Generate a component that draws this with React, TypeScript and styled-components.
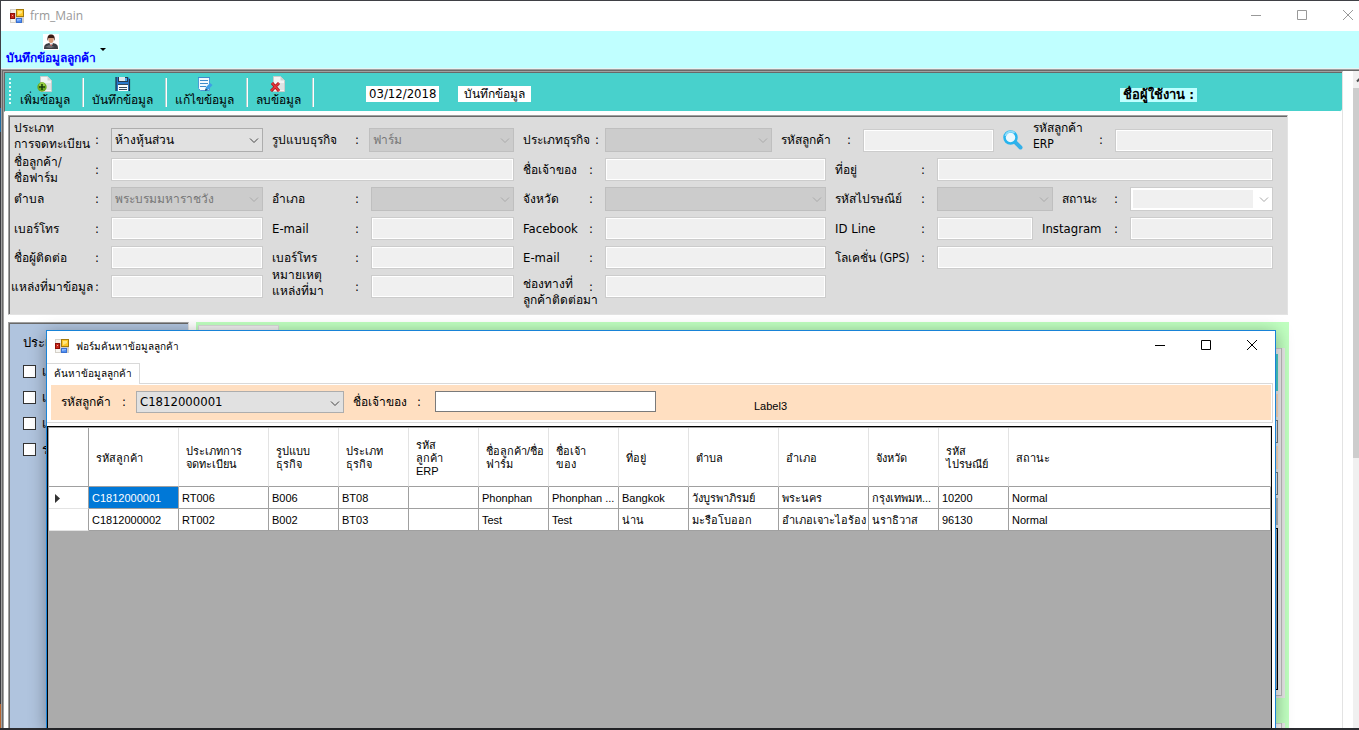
import React from "react";
import styled, { createGlobalStyle, css } from "styled-components";

const tahoma = `"DejaVu Sans Condensed", "Noto Sans", sans-serif`;
const sansSerif = `"Liberation Sans", sans-serif`;
const segoe = `"Open Sans", "Noto Sans", sans-serif`;

const GlobalStyle = createGlobalStyle`
  *, *::before, *::after { box-sizing: border-box; }
  body { margin: 0; background: #2b2c30; font-family: ${tahoma}; font-size: 13px; color: #000; overflow: hidden; }
  button, input, select { font: inherit; color: inherit; margin: 0; border-radius: 0; }
`;

const sunken = css`
  border-style: solid;
  border-width: 1px;
  border-color: #a0a0a0 #e3e3e3 #e3e3e3 #a0a0a0;
  box-shadow: inset 1px 1px 0 #696969;
`;

const Desktop = styled.div`
  position: relative;
  display: flex;
  flex-direction: column;
  height: 100vh;
  padding: 1px 0 2px 1px;
  background: linear-gradient(#3f4045 0 108px, #1f6aa0 108px 132px, #3a3b3f 132px 704px, #b5622c 704px 728px, #2b2c30 728px);
  overflow: hidden;
`;

const TitleBar = styled.header<{ $inner?: boolean }>`
  display: flex;
  align-items: center;
  flex: none;
  gap: ${(p) => (p.$inner ? 7 : 6)}px;
  height: ${(p) => (p.$inner ? 29 : 30)}px;
  padding-left: ${(p) => (p.$inner ? 8 : 9)}px;
  background: #fff;
  color: ${(p) => (p.$inner ? "#000" : "#999")};
`;

const Title = styled.h1<{ $inner?: boolean }>`
  flex: 1;
  margin: 0;
  font: 400 ${(p) => (p.$inner ? 10 : 12)}px/16px ${segoe};
`;

const Controls = styled.div<{ $inner?: boolean }>`
  display: flex;
  align-self: stretch;
  gap: ${(p) => (p.$inner ? 0 : 24)}px;
`;

const ControlButton = styled.button<{ $inner?: boolean }>`
  display: flex;
  align-items: center;
  justify-content: center;
  width: ${(p) => (p.$inner ? 46 : 22)}px;
  padding: 0 0 2px;
  border: 0;
  background: none;
`;

const MenuStrip = styled.nav`
  display: flex;
  align-items: center;
  flex: none;
  gap: 4px;
  height: 38px;
  padding: 1px 0 0 5px;
  background: #c0ffff;
  border-bottom: 1px solid #e8f4f4;
`;

const MenuButton = styled.button`
  display: flex;
  flex-direction: column;
  align-items: center;
  padding: 0;
  border: 0;
  background: none;
  color: #0000ff;
  font: 700 12px/17px ${sansSerif};
`;

const Mdi = styled.div`
  display: flex;
  flex: 1;
  min-height: 0;
  background: #fff;
  border-top: 1px solid #a0a0a0;
  border-left: 1px solid #a0a0a0;
`;

const MdiEdge = styled.div`
  display: flex;
  flex: 1;
  min-width: 0;
  border-top: 1px solid #696969;
  border-left: 1px solid #696969;
`;

const ChildForm = styled.main`
  display: flex;
  flex-direction: column;
  flex: 1;
  min-width: 0;
  margin-right: 10px;
  background: #fff;
  border-style: solid;
  border-width: 1px 1px 0;
  border-color: #a0a0a0 #e3e3e3 #e3e3e3 #a0a0a0;
`;

const ScrollTrack = styled.div`
  flex: none;
  width: 6px;
  background: #f0f0f0;
  overflow: hidden;
`;

const ScrollArrow = styled.svg`
  display: block;
  width: 17px;
  height: 17px;
`;

const ScrollThumb = styled.div`
  height: 370px;
  background: #cdcdcd;
`;

const ToolStrip = styled.div`
  display: flex;
  flex: none;
  height: 40px;
  border-top: 1px solid #696969;
  border-left: 1px solid #696969;
  border-bottom: 1px solid #fff;
  border-radius: 0 0 3px 0;
  background: #48d1cc;
`;

const Grip = styled.i`
  width: 2px;
  margin: 5px 0 5px 4px;
  background: repeating-linear-gradient(#e6fbfa 0 2px, #48d1cc 2px 4px);
`;

const ToolButton = styled.button<{ $width: number }>`
  display: flex;
  flex-direction: column;
  align-items: center;
  width: ${(p) => p.$width}px;
  padding: 3px 4px 0 0;
  border: 0;
  background: none;
  font-size: 12px;
  line-height: 17px;
  white-space: nowrap;
`;

const Separator = styled.i`
  width: 2px;
  margin: 5px 0 4px;
  background: linear-gradient(90deg, #b5d0cf 50%, #fff 50%);
`;

const Tag = styled.span<{ $user?: boolean; $small?: boolean }>`
  align-self: flex-start;
  margin: ${(p) => (p.$user ? "15px 145px 0 auto" : "13px 0 0 19px")};
  padding: 0 ${(p) => (p.$small ? 6 : 3)}px;
  background: ${(p) => (p.$user ? "#c0ffff" : "#fff")};
  font-size: ${(p) => (p.$small ? 12 : 13)}px;
  font-weight: ${(p) => (p.$user ? 700 : 400)};
  line-height: ${(p) => (p.$user ? 14 : 16)}px;
  white-space: nowrap;
`;

const ToolGap = styled.span`
  width: 33px;
`;

const FormPanel = styled.form`
  ${sunken}
  display: flex;
  flex-direction: column;
  flex: none;
  gap: 6px;
  margin: 3px 54px 0 4px;
  padding: 12px 14px 16px 1px;
  background: #dcdcdc;
`;

const FormRow = styled.div<{ $tall?: boolean }>`
  display: flex;
  align-items: center;
  height: ${(p) => (p.$tall ? 24 : 23)}px;
`;

type Shift = "up" | "down" | undefined;

const LabelBox = styled.label<{ $width: number; $edge?: number; $end?: number }>`
  display: flex;
  align-items: center;
  flex: none;
  width: ${(p) => p.$width}px;
  padding: 0 ${(p) => p.$end ?? 12}px 0 ${(p) => p.$edge ?? 9}px;
  line-height: 16px;
  white-space: pre;
`;

const LabelText = styled.span<{ $shift?: Shift; $latin?: boolean }>`
  flex: 1;
  min-width: 0;
  padding: ${(p) => (p.$shift === "up" ? "0 0 8px" : p.$shift === "down" ? "10px 0 0" : "0")};
  font-size: ${(p) => (p.$latin ? 13 : 12)}px;
`;

const TextField = styled.input<{ $basis: number }>`
  flex: ${(p) => p.$basis} 1 ${(p) => p.$basis}px;
  min-width: 0;
  height: 23px;
  padding: 0 3px;
  border: 1px solid #ccc;
  outline: 1px solid #fff;
  outline-offset: -2px;
  background: #f0f0f0;
`;

const ComboBox = styled.span<{ $basis: number }>`
  position: relative;
  display: flex;
  flex: ${(p) => p.$basis} 1 ${(p) => p.$basis}px;
  min-width: 0;
  font-size: 12px;
`;

const comboSkins = {
  enabled: css`background: #e1e1e1; border: 1px solid #adadad; color: #000;`,
  disabled: css`background: #ccc; border: 1px solid #bfbfbf; color: #777;`,
  editable: css`
    background: linear-gradient(#f0f0f0, #f0f0f0) 2px 2px / calc(100% - 21px) calc(100% - 4px) no-repeat #fff;
    border: 1px solid #ccc;
    color: #777;
  `,
};

const Select = styled.select<{ $skin: keyof typeof comboSkins; $height?: number }>`
  appearance: none;
  width: 100%;
  height: ${(p) => p.$height ?? 24}px;
  padding: 0 20px 0 3px;
  opacity: 1;
  ${(p) => comboSkins[p.$skin]}
`;

const ComboArrow = styled.svg`
  position: absolute;
  right: 4px;
  top: 9px;
  width: 10px;
  height: 7px;
  pointer-events: none;
`;

const SearchButton = styled.button`
  display: flex;
  flex: none;
  width: 39px;
  padding: 0 0 0 9px;
  border: 0;
  background: none;
`;

const Lower = styled.div`
  display: flex;
  flex: 1;
  min-height: 0;
  gap: 7px;
  margin: 7px 53px 0 4px;
`;

const SidePanel = styled.fieldset`
  ${sunken}
  display: flex;
  flex-direction: column;
  flex: none;
  gap: 10px;
  width: 181px;
  margin: 0;
  padding: 11px 0 0 14px;
  border-bottom: 0;
  background: #b0c4de;
`;

const SideHeading = styled.span`
  margin-bottom: 1px;
  line-height: 18px;
`;

const CheckLabel = styled.label`
  display: flex;
  align-items: center;
  gap: 6px;
  height: 16px;
`;

const CheckBox = styled.input`
  appearance: none;
  width: 13px;
  height: 13px;
  border: 1px solid #333;
  background: #fff;
`;

const GreenPanel = styled.section`
  display: flex;
  flex-direction: column;
  flex: 1;
  min-width: 0;
  padding: 3px 4px 0 2px;
  background: #c0ffc0;
  overflow: hidden;
`;

const BackTab = styled.div`
  flex: none;
  width: 81px;
  height: 23px;
  background: #f0f0f0;
  border: 1px solid #d9d9d9;
`;

const BackPage = styled.div`
  display: flex;
  flex-direction: column;
  flex: none;
  height: 350px;
  margin-bottom: 25px;
  padding: 6px 4px 6px 0;
  border-right: 3px solid #e6e6e6;
  border-bottom: 2px solid #e6e6e6;
  background: #f0f0f0;
  box-shadow: inset -1px -1px 0 #bbb, inset 0 1px 0 #ccc;
`;

const BackBlock = styled.div<{ $height: number; $color: string; $line?: string }>`
  flex: none;
  height: ${(p) => p.$height}px;
  margin-bottom: 3px;
  background: ${(p) => p.$color};
  border: 1px solid ${(p) => p.$line ?? "transparent"};
`;

const Dialog = styled.section`
  position: absolute;
  top: 330px;
  right: 83px;
  bottom: 2px;
  left: 46px;
  display: flex;
  flex-direction: column;
  border: 1px solid #1883d7;
  border-bottom: 0;
  background: #fff;
  box-shadow: 0 3px 16px rgba(0, 0, 0, 0.35);
  font: 11px/13px ${sansSerif};
`;

const TabRow = styled.div`
  display: flex;
  flex: none;
  height: 23px;
  padding-top: 3px;
`;

const Tab = styled.button`
  position: relative;
  width: 93px;
  height: 21px;
  padding: 0 0 2px;
  border: 1px solid #d9d9d9;
  border-width: 1px 1px 0 0;
  background: #fff;
  font-size: 10px;
  white-space: nowrap;
`;

const TabPage = styled.div`
  display: flex;
  flex: none;
  height: 40px;
  margin-right: 2px;
  padding: 1px 1px 2px 4px;
  border: 1px solid #d9d9d9;
  border-left: 0;
`;

const FilterBar = styled.form`
  display: flex;
  align-items: flex-start;
  flex: 1;
  padding: 6px 0 0 1px;
  background: #ffdfc1;
  font: 13px/16px ${tahoma};
`;

const FilterLabel = styled(LabelBox)`
  height: 22px;
`;

const FilterCombo = styled.span`
  position: relative;
  width: 208px;
`;

const OwnerInput = styled.input`
  width: 221px;
  height: 21px;
  padding: 0 3px;
  border: 1px solid #7a7a7a;
  background: #fff;
`;

const Note = styled.span`
  margin: 7px 0 0 98px;
  font: 11px/16px ${sansSerif};
`;

const GridFrame = styled.div`
  flex: 1;
  min-height: 0;
  margin: 3px 3px 0 0;
  border: 1px solid #000;
  border-bottom: 0;
  background: #ababab;
  overflow: hidden;
`;

const DataTable = styled.table`
  width: 100%;
  table-layout: fixed;
  border-collapse: separate;
  border-spacing: 0;
  border-top: 1px solid #a0a0a0;
  border-left: 1px solid #a0a0a0;
  background: #fff;
`;

const HeadCell = styled.th`
  height: 59px;
  padding: 2px 2px 0 7px;
  border-right: 1px solid #e3e3e3;
  border-bottom: 1px solid #a0a0a0;
  font-weight: 400;
  text-align: left;
  vertical-align: middle;
  white-space: pre-line;
  line-height: 13px;

  &:first-child { border-right-color: #a0a0a0; }
`;

const Cell = styled.td<{ $selected?: boolean }>`
  height: 22px;
  padding: 2px 0 0 3px;
  border-right: 1px solid #a0a0a0;
  border-bottom: 1px solid #a0a0a0;
  background: ${(p) => (p.$selected ? "#0078d7" : "#fff")};
  color: ${(p) => (p.$selected ? "#fff" : "#000")};
  overflow: hidden;
  text-overflow: ellipsis;
  white-space: nowrap;
`;

const RowHead = styled.th`
  padding: 2px 0 0 6px;
  border-right: 1px solid #a0a0a0;
  border-bottom: 1px solid #e3e3e3;
  text-align: left;
  line-height: 0;
`;

const FormIcon = () => (
  <svg width="14" height="14" viewBox="0 0 14 14" aria-hidden="true">
    <rect width="14" height="14" fill="#d4d0c8" />
    <rect x="1" y="1" width="5" height="3" fill="#f2f0ea" />
    <rect x="1" y="10" width="4" height="3" fill="#f7f6f2" />
    <rect x="6.5" y="0.5" width="7" height="7" fill="#ffc928" stroke="#a57b0b" />
    <path d="M8 2h4v2L8 6z" fill="#ffe680" />
    <rect x="0.5" y="4.5" width="4" height="5" fill="#c9281b" stroke="#8c1008" />
    <rect x="2" y="6" width="1" height="1" fill="#f5a79c" />
    <rect x="6.5" y="9.5" width="5" height="4" fill="#4f8df0" stroke="#3a70cf" />
    <path d="M7 10h4v1l-4 1z" fill="#8dbaff" />
  </svg>
);

const PersonIcon = () => (
  <svg width="16" height="16" viewBox="0 0 16 16" aria-hidden="true">
    <rect width="16" height="16" fill="#fff" />
    <path d="M1 15c0-4 1-5 5-6h4c4 1 5 2 5 6z" fill="#3b3d42" />
    <path d="M6.5 9L8 14l2-5z" fill="#e9edf2" />
    <path d="M8 10l-.7 1L8 14l.8-3z" fill="#b32a20" />
    <path d="M2 13l4-2 6 2-5 1z" fill="#6c6e73" />
    <ellipse cx="8" cy="5.5" rx="2.6" ry="3.5" fill="#d79a78" />
    <path d="M4.500 7C4 2 5.500 .5 8 .5s4.500 1.500 3.500 6.500l-1-3-5 0z" fill="#3a1d16" />
  </svg>
);

const Sheet = () => (
  <>
    <path d="M3.500 .5h7l4 4v11h-11z" fill="#f3f4f4" stroke="#c9cccc" />
    <path d="M10.500 .5v4h4z" fill="#cfd3d3" />
    <path d="M8 7h6v7H8z" fill="#dfe3e3" />
  </>
);

const AddIcon = () => (
  <svg width="16" height="16" viewBox="0 0 16 16" aria-hidden="true">
    <Sheet />
    <circle cx="5" cy="11" r="4.700" fill="#6aa81d" />
    <circle cx="5" cy="9.500" r="3" fill="#9ace43" />
    <path d="M5 8v6M2 11h6" stroke="#153a08" strokeWidth="1.500" />
  </svg>
);

const SaveIcon = () => (
  <svg width="16" height="16" viewBox="0 0 16 16" aria-hidden="true">
    <path d="M1 1h12l2 2v12H1z" fill="#2877c9" />
    <path d="M1 1v14M14.500 3v12" stroke="#1b3348" strokeWidth="1.200" />
    <rect x="3" y="1" width="10" height="5" fill="#25394b" />
    <rect x="4" y="1" width="6" height="4" fill="#dfe9ee" />
    <rect x="10" y="2" width="2" height="3" fill="#49a9ee" />
    <rect x="3" y="8" width="10" height="7" fill="#f6fbfd" />
    <path d="M3 8.500h10M4 11.500h8M4 13.500h8" stroke="#35495a" />
  </svg>
);

const EditIcon = () => (
  <svg width="16" height="16" viewBox="0 0 16 16" aria-hidden="true">
    <path d="M1.500 1.500h11v13h-9l-2-2z" fill="#f2f9fe" stroke="#4a9bd6" />
    <path d="M1 1.500h12M3 4.500h8M3 7.500h8M3 10.500h6" stroke="#3c8ccb" />
    <path d="M8 15l1-4 4-4 2.500 2-4.500 5z" fill="#3d9fe6" />
    <path d="M8 15l.7-2.500 1.800 1.500z" fill="#24425a" />
  </svg>
);

const DeleteIcon = () => (
  <svg width="16" height="16" viewBox="0 0 16 16" aria-hidden="true">
    <Sheet />
    <path d="M2 7l7 8M9 7l-8 8" stroke="#a81218" strokeWidth="3" />
    <path d="M2 7l7 8M9 7l-8 8" stroke="#e5383c" strokeWidth="1.500" />
  </svg>
);

const SearchIcon = () => (
  <svg width="20" height="20" viewBox="0 0 20 20" aria-hidden="true">
    <path d="M12 12l5.500 5.500" stroke="#35b0e8" strokeWidth="4" strokeLinecap="round" />
    <circle cx="7.500" cy="7.500" r="6" fill="#eaf8fe" stroke="#27b4ee" strokeWidth="2.500" />
    <path d="M2.500 6a5.500 5.500 0 0 1 9-3" fill="none" stroke="#8edcfa" strokeWidth="2" />
  </svg>
);

const WindowButtons = ({ inner }: { inner?: boolean }) => {
  const stroke = inner ? "#000" : "#999";
  const glyphs = [
    { name: "Minimize", d: "M0 5.5h10" },
    { name: "Maximize", d: "M.5 .5h9v9h-9z" },
    { name: "Close", d: "M0 0l10 10M10 0L0 10" },
  ];
  return (
    <Controls $inner={inner}>
      {glyphs.map((g) => (
        <ControlButton key={g.name} type="button" $inner={inner} aria-label={g.name}>
          <svg width="10" height="10" viewBox="0 0 10 10">
            <path d={g.d} fill="none" stroke={stroke} />
          </svg>
        </ControlButton>
      ))}
    </Controls>
  );
};

const Chevron = ({ color }: { color: string }) => (
  <ComboArrow viewBox="0 0 10 7" aria-hidden="true">
    <path d="M1 1.500l4 4 4-4" fill="none" stroke={color} />
  </ComboArrow>
);

type FieldProps = {
  id: string;
  label: string;
  width: number;
  basis: number;
  kind?: "text" | keyof typeof comboSkins;
  value?: string;
  edge?: number;
  end?: number;
  shift?: Shift;
};

const Field = ({ id, label, width, basis, kind = "text", value = "", edge, end, shift }: FieldProps) => (
  <>
    <LabelBox htmlFor={id} $width={width} $edge={edge} $end={end}>
      <LabelText $shift={shift} $latin={/^[A-Za-z -]+$/.test(label)}>{label}</LabelText>
      <span>:</span>
    </LabelBox>
    {kind === "text" ? (
      <TextField id={id} $basis={basis} disabled />
    ) : (
      <ComboBox $basis={basis}>
        <Select id={id} $skin={kind} disabled={kind !== "enabled"} defaultValue={value}>
          <option value={value}>{value}</option>
        </Select>
        <Chevron color={kind === "enabled" ? "#444" : "#aaa"} />
      </ComboBox>
    )}
  </>
);

const columns = [
  { title: "รหัสลูกค้า", width: 90 },
  { title: "ประเภทการ\nจดทะเบียน", width: 90 },
  { title: "รูปแบบ\nธุรกิจ", width: 70 },
  { title: "ประเภท\nธุรกิจ", width: 70 },
  { title: "รหัส\nลูกค้า\nERP", width: 70 },
  { title: "ชื่อลูกค้า/ชื่อ\nฟาร์ม", width: 70 },
  { title: "ชื่อเจ้า\nของ", width: 70 },
  { title: "ที่อยู่", width: 70 },
  { title: "ตำบล", width: 90 },
  { title: "อำเภอ", width: 90 },
  { title: "จังหวัด", width: 70 },
  { title: "รหัส\nไปรษณีย์", width: 70 },
  { title: "สถานะ", width: 0 },
];

const customers = [
  ["C1812000001", "RT006", "B006", "BT08", "", "Phonphan", "Phonphan ...", "Bangkok", "วังบูรพาภิรมย์", "พระนคร", "กรุงเทพมห...", "10200", "Normal"],
  ["C1812000002", "RT002", "B002", "BT03", "", "Test", "Test", "น่าน", "มะรือโบออก", "อำเภอเจาะไอร้อง", "นราธิวาส", "96130", "Normal"],
];

const tools = [
  { label: "เพิ่มข้อมูล", width: 71, icon: <AddIcon /> },
  { label: "บันทึกข้อมูล", width: 81, icon: <SaveIcon /> },
  { label: "แก้ไขข้อมูล", width: 79, icon: <EditIcon /> },
  { label: "ลบข้อมูล", width: 64, icon: <DeleteIcon /> },
];

export default function App() {
  return (
    <>
      <GlobalStyle />
      <Desktop>
        <TitleBar>
          <FormIcon />
          <Title>frm_Main</Title>
          <WindowButtons />
        </TitleBar>
        <MenuStrip>
          <MenuButton type="button">
            <PersonIcon />
            บันทึกข้อมูลลูกค้า
          </MenuButton>
          <svg width="6" height="4" viewBox="0 0 6 4" aria-hidden="true">
            <path d="M0 0h6L3 3z" />
          </svg>
        </MenuStrip>
        <Mdi>
          <MdiEdge>
            <ChildForm>
              <ToolStrip>
                <Grip />
                {tools.map((t) => (
                  <React.Fragment key={t.label}>
                    <ToolButton type="button" $width={t.width}>
                      {t.icon}
                      {t.label}
                    </ToolButton>
                    <Separator />
                  </React.Fragment>
                ))}
                <ToolGap />
                <Tag>03/12/2018</Tag>
                <Tag $small>บันทึกข้อมูล</Tag>
                <Tag $user>ชื่อผู้ใช้งาน :</Tag>
              </ToolStrip>
              <FormPanel>
                <FormRow $tall>
                  <Field id="reg" label={"ประเภท\nการจดทะเบียน"} width={101} basis={152} edge={4} kind="enabled" value="ห้างหุ้นส่วน" shift="up" />
                  <Field id="biz" label="รูปแบบธุรกิจ" width={106} basis={145} end={10} kind="disabled" value="ฟาร์ม" />
                  <Field id="bizType" label="ประเภทธุรกิจ" width={91} basis={167} end={6} kind="disabled" />
                  <Field id="code" label="รหัสลูกค้า" width={91} basis={131} />
                  <SearchButton type="button" aria-label="ค้นหา">
                    <SearchIcon />
                  </SearchButton>
                  <Field id="erp" label={"รหัสลูกค้า\nERP"} width={82} basis={158} edge={0} shift="up" />
                </FormRow>
                <FormRow>
                  <Field id="name" label={"ชื่อลูกค้า/\nชื่อฟาร์ม"} width={101} basis={403} edge={4} />
                  <Field id="owner" label="ชื่อเจ้าของ" width={91} basis={221} />
                  <Field id="address" label="ที่อยู่" width={111} basis={336} />
                </FormRow>
                <FormRow $tall>
                  <Field id="tambon" label="ตำบล" width={101} basis={152} edge={4} kind="disabled" value="พระบรมมหาราชวัง" />
                  <Field id="amphoe" label="อำเภอ" width={108} basis={143} kind="disabled" />
                  <Field id="province" label="จังหวัด" width={91} basis={221} kind="disabled" />
                  <Field id="zip" label="รหัสไปรษณีย์" width={111} basis={116} kind="disabled" />
                  <Field id="status" label="สถานะ" width={77} basis={143} kind="editable" />
                </FormRow>
                <FormRow>
                  <Field id="phone" label="เบอร์โทร" width={101} basis={152} edge={4} />
                  <Field id="email" label="E-mail" width={108} basis={143} />
                  <Field id="facebook" label="Facebook" width={91} basis={221} />
                  <Field id="line" label="ID Line" width={111} basis={96} />
                  <Field id="instagram" label="Instagram" width={97} basis={143} />
                </FormRow>
                <FormRow>
                  <Field id="contact" label="ชื่อผู้ติดต่อ" width={101} basis={152} edge={4} />
                  <Field id="contactPhone" label="เบอร์โทร" width={108} basis={143} />
                  <Field id="contactEmail" label="E-mail" width={91} basis={221} />
                  <Field id="gps" label="โลเคชั่น (GPS)" width={111} basis={336} />
                </FormRow>
                <FormRow>
                  <Field id="source" label="แหล่งที่มาข้อมูล" width={101} basis={152} edge={1} />
                  <Field id="remark" label={"หมายเหตุ\nแหล่งที่มา"} width={108} basis={143} shift="up" />
                  <Field id="channel" label={"ช่องทางที่\nลูกค้าติดต่อมา"} width={91} basis={221} shift="down" />
                  <LabelBox as="span" $width={447} />
                </FormRow>
              </FormPanel>
              <Lower>
                <SidePanel>
                  <SideHeading>ประเภท</SideHeading>
                  {["เ", "เ", "เ", "ร"].map((text, i) => (
                    <CheckLabel key={i}>
                      <CheckBox type="checkbox" />
                      {text}
                    </CheckLabel>
                  ))}
                </SidePanel>
                <GreenPanel>
                  <BackTab />
                  <BackPage>
                    <BackBlock $height={37} $color="#48d1cc" />
                    <BackBlock $height={23} $color="#ffdfc1" />
                    <BackBlock $height={23} $color="#f0f0f0" $line="#7a7a7a" />
                    <BackBlock $height={23} $color="#ffdfc1" />
                    <BackBlock $height={23} $color="#f0f0f0" $line="#7a7a7a" />
                    <BackBlock $height={27} $color="#b5b5b5" />
                    <BackBlock $height={162} $color="#ababab" $line="#000" />
                  </BackPage>
                  <BackPage />
                </GreenPanel>
              </Lower>
            </ChildForm>
            <ScrollTrack>
              <ScrollArrow viewBox="0 0 17 17" aria-hidden="true">
                <path d="M4 10.500l4.500-4.500 4.500 4.500" fill="none" stroke="#505050" strokeWidth="2" />
              </ScrollArrow>
              <ScrollThumb />
            </ScrollTrack>
          </MdiEdge>
        </Mdi>
        <Dialog role="dialog" aria-label="ฟอร์มค้นหาข้อมูลลูกค้า">
          <TitleBar $inner>
            <FormIcon />
            <Title $inner>ฟอร์มค้นหาข้อมูลลูกค้า</Title>
            <WindowButtons inner />
          </TitleBar>
          <TabRow>
            <Tab type="button">ค้นหาข้อมูลลูกค้า</Tab>
          </TabRow>
          <TabPage>
            <FilterBar>
              <FilterLabel htmlFor="findCode" $width={84} $end={10}>
                <LabelText>รหัสลูกค้า</LabelText>
                <span>:</span>
              </FilterLabel>
              <FilterCombo>
                <Select id="findCode" $skin="enabled" $height={22} defaultValue="C1812000001">
                  <option>C1812000001</option>
                  <option>C1812000002</option>
                </Select>
                <Chevron color="#444" />
              </FilterCombo>
              <FilterLabel htmlFor="findOwner" $width={91} $end={14}>
                <LabelText>ชื่อเจ้าของ</LabelText>
                <span>:</span>
              </FilterLabel>
              <OwnerInput id="findOwner" />
              <Note>Label3</Note>
            </FilterBar>
          </TabPage>
          <GridFrame>
            <DataTable>
              <colgroup>
                <col width="40" />
                {columns.map((c) => (
                  <col key={c.title} width={c.width || undefined} />
                ))}
              </colgroup>
              <thead>
                <tr>
                  <HeadCell aria-label="แถว" />
                  {columns.map((c) => (
                    <HeadCell key={c.title} scope="col">{c.title}</HeadCell>
                  ))}
                </tr>
              </thead>
              <tbody>
                {customers.map((row, r) => (
                  <tr key={row[0]}>
                    <RowHead scope="row">
                      {r === 0 && (
                        <svg width="6" height="9" viewBox="0 0 6 9" aria-label="แถวปัจจุบัน">
                          <path d="M0 0l5 4.500L0 9z" fill="#333" />
                        </svg>
                      )}
                    </RowHead>
                    {row.map((value, c) => (
                      <Cell key={c} $selected={r === 0 && c === 0}>{value}</Cell>
                    ))}
                  </tr>
                ))}
              </tbody>
            </DataTable>
          </GridFrame>
        </Dialog>
      </Desktop>
    </>
  );
}
